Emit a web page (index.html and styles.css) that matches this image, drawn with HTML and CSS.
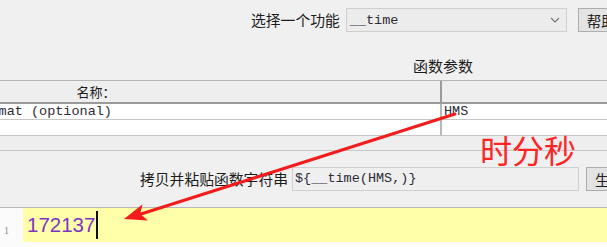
FILE: index.html
```html
<!DOCTYPE html>
<html>
<head>
    <title>函数助手</title>
    <link rel="stylesheet" href="styles.css">
</head>
<body>
    <div class="dialog">
        <div class="func-row">
            <span class="label">选择一个功能</span>
            <div class="select">
                <span class="mono">__time</span>
                <svg class="chevron" width="10" height="6" viewBox="0 0 10 6">
                    <polyline points="1,1 5,5 9,1" fill="none" stroke="#777" stroke-width="1.2"/>
                </svg>
            </div>
            <button class="btn">帮助</button>
        </div>

        <div class="section-title">函数参数</div>

        <div class="params">
            <div class="head name-col">名称：</div>
            <div class="head value-col">值</div>
            <div class="cell name-col mono">Format string for DateFormat (optional)</div>
            <div class="cell value-col mono">HMS</div>
            <div class="cell name-col"></div>
            <div class="cell value-col"></div>
        </div>
        <div class="hscroll"></div>

        <div class="copy-row">
            <span class="label">拷贝并粘贴函数字符串</span>
            <div class="field mono">${__time(HMS,)}</div>
            <button class="btn">生成</button>
        </div>

        <div class="editor">
            <div class="gutter">1</div>
            <div class="code">172137<span class="caret"></span></div>
        </div>

        <div class="note">时分秒</div>
        <svg class="arrow" width="607" height="247" viewBox="0 0 607 247">
            <line x1="455" y1="114" x2="141" y2="214" stroke="#f21c1c" stroke-width="3" stroke-linecap="round"/>
            <polygon points="124,219 142.6,204.2 140.2,213.8 147.8,220.4" fill="#f21c1c"/>
        </svg>
    </div>
</body>
</html>
```

FILE: styles.css
```css
body {
    margin: 0;
    background: #f0f0f0;
    font-family: "Noto Sans CJK SC", "Noto Sans", sans-serif;
    color: #1c1c1c;
    overflow: hidden;
}

.dialog {
    position: relative;
    width: 607px;
    height: 247px;
    overflow: hidden;
}

.mono {
    font-family: "Liberation Mono", "DejaVu Sans Mono", monospace;
    font-size: 13.5px;
    color: #2c2c38;
}

.label {
    font-size: 14.8px;
    line-height: 20px;
    white-space: nowrap;
    flex-shrink: 0;
}

.btn {
    flex-shrink: 0;
    height: 24px;
    width: 60px;
    padding: 0 0 0 8px;
    text-align: left;
    border: 1px solid #adadad;
    background: #e3e3e3;
    font-family: "Noto Sans CJK SC", sans-serif;
    font-size: 14.5px;
    color: #222;
}

.func-row {
    display: flex;
    align-items: center;
    padding: 8px 0 0 251px;
    height: 24px;
}

.select {
    display: flex;
    align-items: center;
    justify-content: space-between;
    flex-shrink: 0;
    width: 221px;
    height: 24px;
    box-sizing: border-box;
    margin-left: 6px;
    margin-right: 11px;
    padding: 0 6px 0 3px;
    border: 1px solid #cfcfcf;
    background: #ececec;
}

.section-title {
    height: 48px;
    box-sizing: border-box;
    padding: 24px 0 0 413px;
    font-size: 15px;
    line-height: 20px;
}

.params {
    display: grid;
    grid-template-columns: 648px 1fr;
    margin-left: -206px;
    border-top: 1px solid #b4b4b4;
}

.head {
    height: 21px;
    background: #eeeeee;
    border-bottom: 2px solid #9a9a9a;
    font-size: 13px;
    line-height: 21px;
    text-align: center;
}

.head.name-col {
    padding-right: 42px;
    border-right: 2px solid #9a9a9a;
}

.head.value-col {
    color: transparent;
}

.cell {
    height: 15px;
    background: #fff;
    border-bottom: 1px solid #c6c6c6;
    line-height: 15px;
    padding-left: 2px;
    white-space: nowrap;
}

.cell.name-col {
    border-right: 2px solid #b8b8b8;
}

.hscroll {
    height: 14px;
    background: #eeeeee;
    border-bottom: 1px solid #c8c8c8;
}

.copy-row {
    display: flex;
    align-items: center;
    height: 56px;
    padding-left: 140px;
    border-bottom: 1px solid #b8b8b8;
}

.field {
    flex-shrink: 0;
    width: 287px;
    height: 24px;
    box-sizing: border-box;
    margin-left: 4px;
    margin-right: 7px;
    padding-left: 2px;
    border: 1px solid #cfcfcf;
    background: #efefef;
    line-height: 22px;
}

.editor {
    display: flex;
    height: 39px;
    background: #fbfbfb;
}

.gutter {
    width: 23px;
    padding: 17px 0 0 4px;
    box-sizing: border-box;
    font-family: "Liberation Serif", serif;
    font-size: 10px;
    color: #888;
}

.code {
    display: flex;
    align-items: center;
    flex: 1;
    height: 34px;
    padding-left: 4px;
    background: #ffffaa;
    font-family: "Liberation Sans", Arial, sans-serif;
    font-size: 20.5px;
    color: #7b36c4;
}

.caret {
    display: inline-block;
    width: 2px;
    height: 28px;
    margin-left: 1px;
    background: #111;
}

.note {
    position: absolute;
    left: 480px;
    top: 131px;
    font-size: 32px;
    line-height: 36px;
    color: #ff2424;
}

.arrow {
    position: absolute;
    left: 0;
    top: 0;
    pointer-events: none;
}
```
